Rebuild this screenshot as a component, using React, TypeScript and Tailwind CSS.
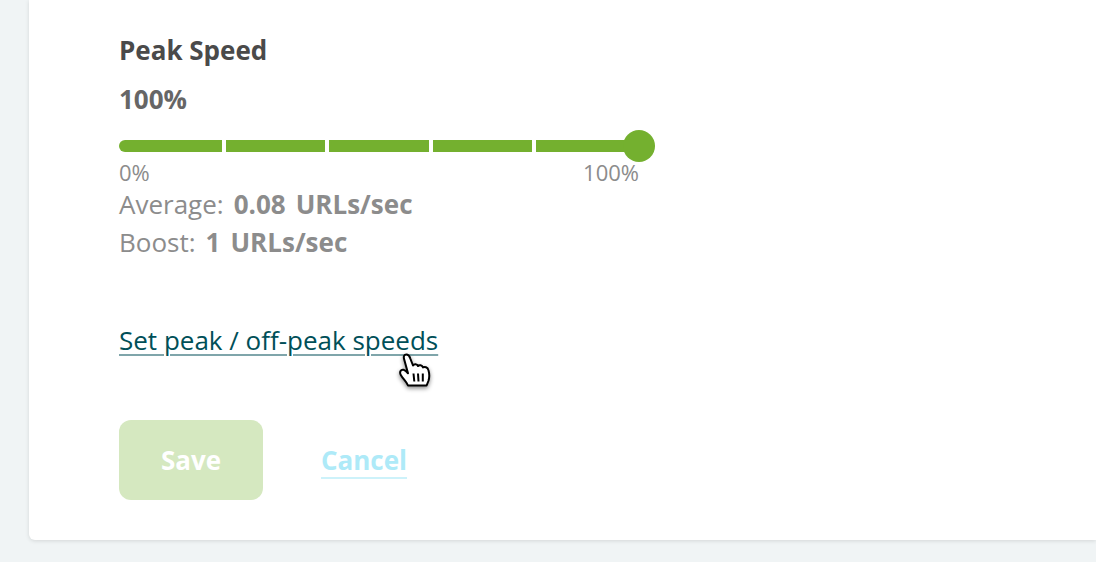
const font = "font-['Open_Sans',sans-serif]";

const HandCursor = () => (
  <svg
    className="absolute left-[398px] top-[353px] drop-shadow-[0_2px_2px_rgba(0,0,0,0.45)]"
    width="36"
    height="38"
    viewBox="0 0 36 38"
    fill="none"
  >
    <path
      d="M10 32.5 C8.5 28.5 5 26 2.8 22 C1.2 19 2.8 16.3 5.5 16.8 C7.2 17.1 8.8 18.8 10 20.3 L6.2 6.5 C5.2 3.4 6.2 1.6 8.3 1.6 C10.3 1.6 11.5 3 12.3 5.5 L15 12.5 C16.2 10.6 19 10.8 20 13 C21.2 11.7 24 12 25 14.4 C26.6 13.4 29.6 14 30.4 17 C31.6 21 31.4 25 30.4 28 L28.6 32.5 Z"
      fill="#fff"
      stroke="#000"
      strokeWidth="2"
      strokeLinejoin="round"
    />
    <path d="M15.5 20.5 L16.3 28.5 M20 20.5 L20.5 28.5 M24.8 20.5 L24.8 28.5" stroke="#000" strokeWidth="2" />
  </svg>
);

const widths = ["w-[103px]", "w-[99px]", "w-[100px]", "w-[99px]", "flex-1"];

export default function App() {
  return (
    <div className={`relative h-[562px] w-[1096px] overflow-hidden bg-[#f0f4f5] ${font}`}>
      <div className="ml-[29px] h-[540px] rounded-bl-[6px] bg-white pl-[90px] shadow-[0_1px_4px_rgba(0,0,0,0.12)]">
        <div className="h-[32px]" />
        <h2 className="text-[26px] leading-[36px] font-bold text-[#4a4a4a]">Peak Speed</h2>
        <div className="mt-[13px] text-[26px] leading-[36px] font-bold text-[#666]">100%</div>

        {/* slider */}
        <div className="relative mt-[23px] flex h-[12px] w-[520px] gap-[4px]">
          {widths.map((w, i) => (
            <div key={i} className={`${w} h-full bg-[#74b02f] ${i === 0 ? "rounded-l-[6px]" : ""}`} />
          ))}
          <div className="absolute top-[-10px] right-[-16px] h-[32px] w-[32px] rounded-full bg-[#74b02f]" />
        </div>
        <div className="mt-[7px] flex w-[520px] justify-between text-[22px] leading-[26px] text-[#8c8c8c]">
          <span>0%</span>
          <span>100%</span>
        </div>

        <div className="flex gap-[10px] text-[26px] leading-[38px] text-[#8c8c8c]">
          <span>Average:</span>
          <span className="flex gap-[10px] font-bold">
            <span>0.08</span>
            <span>URLs/sec</span>
          </span>
        </div>
        <div className="flex gap-[10px] text-[26px] leading-[38px] text-[#8c8c8c]">
          <span>Boost:</span>
          <span className="flex gap-[10px] font-bold">
            <span>1</span>
            <span>URLs/sec</span>
          </span>
        </div>

        <a className="mt-[63px] block w-fit text-[26px] leading-[33px] text-[#004f58] underline decoration-[#7fa5aa] decoration-2 underline-offset-[4px]">
          Set peak / off-peak speeds
        </a>

        <div className="mt-[63px] flex items-center gap-[58px]">
          <button className="h-[80px] w-[144px] rounded-[12px] bg-[#d5e8c0] text-[26px] font-bold text-white">
            Save
          </button>
          <a className="text-[26px] leading-[32px] font-bold text-[#aeeaf8] underline decoration-[#cdf2fa] decoration-2 underline-offset-[7px]">
            Cancel
          </a>
        </div>
      </div>
      <HandCursor />
    </div>
  );
}
